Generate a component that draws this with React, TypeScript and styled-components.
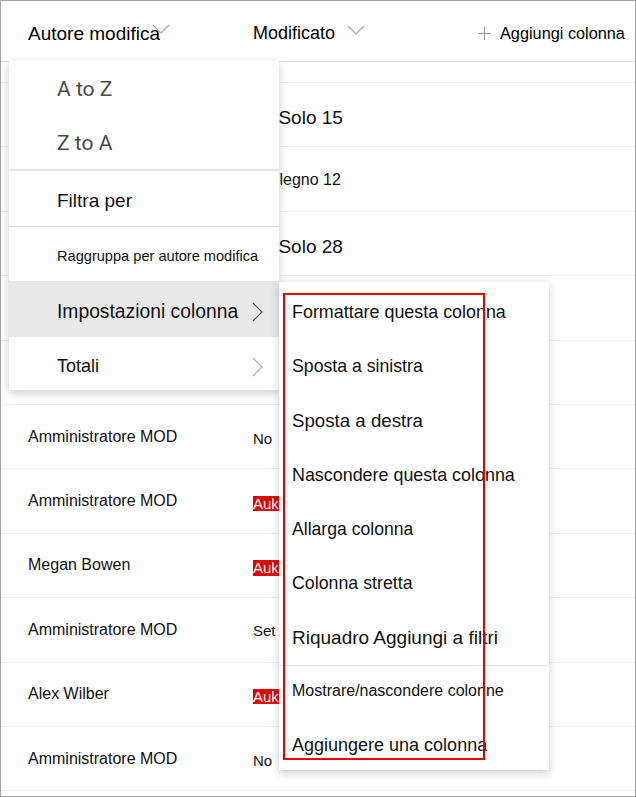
import React from 'react';
import styled, { createGlobalStyle } from 'styled-components';

const GlobalStyle = createGlobalStyle`
  html, body {
    margin: 0;
    padding: 0;
    background: #fff;
  }
  * {
    box-sizing: border-box;
  }
`;

const Frame = styled.div`
  position: relative;
  width: 636px;
  height: 797px;
  border: 1px solid #a3a3a3;
  background: #fff;
  overflow: hidden;
  font-family: 'Liberation Sans', Arial, sans-serif;
  color: #111;
`;

const HeaderRow = styled.div`
  display: flex;
  height: 61px;
  border-bottom: 1px solid #e6e6e6;
  padding-top: 5px;
  align-items: center;
`;

const NameHead = styled.div`
  position: relative;
  width: 252px;
  padding-left: 27px;
  font-size: 19px;
  color: #000;
`;

const HeadChevron = styled.span`
  position: absolute;
  left: 151px;
  top: 1px;
  display: flex;
`;

const ModHead = styled.div`
  display: flex;
  align-items: center;
  gap: 12px;
  width: 225px;
  font-size: 18px;
  color: #000;

  svg {
    margin-top: -8px;
  }
`;

const AddHead = styled.div`
  display: flex;
  align-items: center;
  gap: 9px;
  font-size: 16.3px;
  color: #000;
`;

const Spacer = styled.div`
  height: 21px;
  border-bottom: 1px solid #efefef;
`;

const Row = styled.div`
  display: flex;
  align-items: center;
  height: 64.4px;
  border-bottom: 1px solid #efefef;
`;

const NameCell = styled.div`
  width: 252px;
  padding-left: 27px;
  font-size: 16px;
  color: #111;
`;

const ValueCell = styled.div<{ $size: number; $drop: number; $shift: number }>`
  font-size: ${(p) => p.$size}px;
  padding-top: ${(p) => p.$drop}px;
  margin-left: ${(p) => p.$shift}px;
  color: #111;
  white-space: nowrap;
`;

const Badge = styled.span`
  display: inline-block;
  line-height: 1.05;
  background: #e60000;
  color: #fff;
  padding: 0 1px 0 0;
`;

const Menu = styled.div`
  position: absolute;
  left: 8px;
  top: 60px;
  width: 270px;
  background: #fff;
  box-shadow: 0 3px 9px rgba(0, 0, 0, 0.2);
  display: flex;
  flex-direction: column;
`;

const MenuItem = styled.div<{ $h: number; $size: number; $active?: boolean; $light?: boolean; $drop?: number }>`
  display: flex;
  align-items: center;
  justify-content: space-between;
  height: ${(p) => p.$h}px;
  padding: ${(p) => p.$drop ?? 0}px 16px 0 48px;
  font-size: ${(p) => p.$size}px;
  background: ${(p) => (p.$active ? '#e8e8e8' : '#fff')};
  color: ${(p) => (p.$light ? '#4a4a4a' : '#111')};
  font-family: ${(p) => (p.$light ? "Roboto, 'Liberation Sans', sans-serif" : "'Liberation Sans', Arial, sans-serif")};
`;

const Divider = styled.div<{ $w?: number }>`
  height: ${(p) => p.$w ?? 1}px;
  background: #e4e4e4;
`;

const SubMenu = styled.div`
  position: absolute;
  left: 278px;
  top: 281px;
  width: 270px;
  padding-top: 3px;
  background: #fff;
  box-shadow: 0 3px 9px rgba(0, 0, 0, 0.2);
  display: flex;
  flex-direction: column;
`;

const SubItem = styled.div<{ $h: number; $size: number; $drop?: number }>`
  display: flex;
  align-items: center;
  height: ${(p) => p.$h}px;
  padding-left: 13px;
  padding-top: ${(p) => p.$drop ?? 0}px;
  font-size: ${(p) => p.$size}px;
  color: #111;
  white-space: nowrap;
`;

const Highlight = styled.div`
  position: absolute;
  left: 4px;
  top: 11px;
  width: 202px;
  height: 467px;
  border: 2px solid #e30000;
  pointer-events: none;
`;

const ChevronDown = () => (
  <svg width="18" height="10" viewBox="0 0 18 10">
    <polyline points="1,1 9,9 17,1" fill="none" stroke="#a6a6a6" strokeWidth="1.2" />
  </svg>
);

const ChevronRight = ({ color }: { color: string }) => (
  <svg width="11" height="20" viewBox="0 0 11 20">
    <polyline points="1,1 10,10 1,19" fill="none" stroke={color} strokeWidth="1.2" />
  </svg>
);

const Plus = () => (
  <svg width="13" height="13" viewBox="0 0 13 13">
    <line x1="6.5" y1="0" x2="6.5" y2="13" stroke="#9a9a9a" strokeWidth="1.1" />
    <line x1="0" y1="6.5" x2="13" y2="6.5" stroke="#9a9a9a" strokeWidth="1.1" />
  </svg>
);

type RowData = { name: string; value: string; size: number; drop?: number; shift?: number; badge?: boolean };

const rows: RowData[] = [
  { name: 'Amministratore MOD', value: 'Kit Solo 15', size: 19, drop: 7, shift: -2 },
  { name: 'Megan Bowen', value: 'Del legno 12', size: 16, drop: 2, shift: -2 },
  { name: 'Alex Wilber', value: 'Kit Solo 28', size: 19, drop: 7, shift: -2 },
  { name: 'Amministratore MOD', value: 'No', size: 15 },
  { name: 'Megan Bowen', value: 'Set', size: 15 },
  { name: 'Amministratore MOD', value: 'No', size: 15, drop: 4 },
  { name: 'Amministratore MOD', value: 'Auk', size: 15, drop: 4, badge: true },
  { name: 'Megan Bowen', value: 'Auk', size: 15, drop: 4, badge: true },
  { name: 'Amministratore MOD', value: 'Set', size: 15, drop: 2 },
  { name: 'Alex Wilber', value: 'Auk', size: 15, drop: 4, badge: true },
  { name: 'Amministratore MOD', value: 'No', size: 15, drop: 4 },
];

const subItems: { label: string; size: number }[] = [
  { label: 'Formattare questa colonna', size: 17.9 },
  { label: 'Sposta a sinistra', size: 17.7 },
  { label: 'Sposta a destra', size: 18.7 },
  { label: 'Nascondere questa colonna', size: 17.9 },
  { label: 'Allarga colonna', size: 17.6 },
  { label: 'Colonna stretta', size: 17.8 },
  { label: 'Riquadro Aggiungi a filtri', size: 19 },
];

export default function App() {
  return (
    <>
      <GlobalStyle />
      <Frame>
        <HeaderRow>
          <NameHead>
            Autore modifica
            <HeadChevron>
              <ChevronDown />
            </HeadChevron>
          </NameHead>
          <ModHead>
            Modificato
            <ChevronDown />
          </ModHead>
          <AddHead>
            <Plus />
            Aggiungi colonna
          </AddHead>
        </HeaderRow>
        <Spacer />
        {rows.map((r, i) => (
          <Row key={i}>
            <NameCell>{r.name}</NameCell>
            <ValueCell $size={r.size} $drop={r.drop ?? 0} $shift={r.shift ?? 0}>
              {r.badge ? <Badge>{r.value}</Badge> : r.value}
            </ValueCell>
          </Row>
        ))}

        <Menu>
          <MenuItem $h={55} $size={21} $light>A to Z</MenuItem>
          <MenuItem $h={53} $size={21} $light>Z to A</MenuItem>
          <Divider $w={2} />
          <MenuItem $h={55} $size={19} $drop={4}>Filtra per</MenuItem>
          <Divider />
          <MenuItem $h={54} $size={14.6} $drop={4}>Raggruppa per autore modifica</MenuItem>
          <MenuItem $h={56} $size={19.3} $active $drop={6}>
            Impostazioni colonna
            <ChevronRight color="#555" />
          </MenuItem>
          <MenuItem $h={53} $size={18} $drop={6}>
            Totali
            <ChevronRight color="#aaa" />
          </MenuItem>
        </Menu>

        <SubMenu>
          {subItems.map((s) => (
            <SubItem key={s.label} $h={54.3} $size={s.size}>
              {s.label}
            </SubItem>
          ))}
          <Divider />
          <SubItem $h={50} $size={16}>Mostrare/nascondere colonne</SubItem>
          <SubItem $h={54} $size={18} $drop={5}>Aggiungere una colonna</SubItem>
          <Highlight />
        </SubMenu>
      </Frame>
    </>
  );
}
